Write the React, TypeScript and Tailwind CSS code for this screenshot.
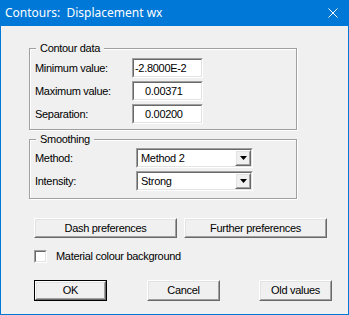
import React from "react";

function Sunken({ className = "", children }: { className?: string; children?: React.ReactNode }) {
  return (
    <div className={`border-t border-l border-t-[#a0a0a0] border-l-[#a0a0a0] border-b border-r border-b-white border-r-white ${className}`}>
      <div className="h-full w-full border-t border-l border-t-[#696969] border-l-[#696969] border-b border-r border-b-[#e3e3e3] border-r-[#e3e3e3] bg-white flex items-center">
        {children}
      </div>
    </div>
  );
}

function Raised({ className = "", children }: { className?: string; children?: React.ReactNode }) {
  return (
    <div className={`border-t border-l border-t-white border-l-white border-b border-r border-b-[#696969] border-r-[#696969] bg-[#f0f0f0] ${className}`}>
      <div className="h-full w-full border-t border-l border-t-[#e3e3e3] border-l-[#e3e3e3] border-b border-r border-b-[#a0a0a0] border-r-[#a0a0a0] flex items-center justify-center">
        {children}
      </div>
    </div>
  );
}

function Group({ title, className = "", children }: { title: string; className?: string; children?: React.ReactNode }) {
  return (
    <div className={`relative w-[268px] border border-[#a0a0a0] shadow-[inset_1px_1px_0_#fff,1px_1px_0_#fff] ${className}`}>
      <span className="absolute left-[6px] top-[-7px] bg-[#f0f0f0] px-[4px] leading-[13px] whitespace-nowrap">{title}</span>
      {children}
    </div>
  );
}

function Arrow() {
  return (
    <svg width="7" height="4" viewBox="0 0 7 4">
      <path d="M0 0H7L3.5 4Z" fill="#000" />
    </svg>
  );
}

function Select({ value }: { value: string }) {
  return (
    <Sunken className="w-[117px] h-[20px]">
      <span className="pl-[3px] flex-1 leading-[16px]">{value}</span>
      <Raised className="w-[16px] h-[16px]">
        <Arrow />
      </Raised>
    </Sunken>
  );
}

export default function App() {
  return (
    <div className="w-[349px] h-[315px] flex flex-col bg-[#f0f0f0] font-['Liberation_Sans',Arial,sans-serif] text-black">
      <div className="h-[26px] shrink-0 bg-[#0078d7] flex items-center justify-between pl-[5px] pr-[11px] text-white text-[12px] font-['Noto_Sans',sans-serif]">
        <span className="whitespace-pre">Contours:  Displacement wx</span>
        <svg width="10" height="10" viewBox="0 0 10 10">
          <path d="M0.5 0.5L9.5 9.5M9.5 0.5L0.5 9.5" stroke="#fff" strokeWidth="1" />
        </svg>
      </div>
      <div className="flex-1 border-l border-r border-b border-[#0078d7] pl-[28px] pt-[22px] text-[11px] tracking-[-0.3px]">
        <Group title="Contour data" className="h-[82px]">
          <div className="flex flex-col gap-[3px] pt-[9px] pl-[5px]">
            <div className="flex items-center h-[20px]">
              <span className="w-[97px]">Minimum value:</span>
              <Sunken className="w-[71px] h-[20px]">
                <span className="pl-[1px]">-2.8000E-2</span>
              </Sunken>
            </div>
            <div className="flex items-center h-[20px]">
              <span className="w-[97px]">Maximum value:</span>
              <Sunken className="w-[71px] h-[20px]">
                <span className="pl-[11px]">0.00371</span>
              </Sunken>
            </div>
            <div className="flex items-center h-[20px]">
              <span className="w-[97px]">Separation:</span>
              <Sunken className="w-[71px] h-[20px]">
                <span className="pl-[11px]">0.00200</span>
              </Sunken>
            </div>
          </div>
        </Group>
        <Group title="Smoothing" className="h-[60px] mt-[9px]">
          <div className="flex flex-col gap-[3px] pt-[8px] pl-[5px]">
            <div className="flex items-center h-[20px]">
              <span className="w-[101px]">Method:</span>
              <Select value="Method 2" />
            </div>
            <div className="flex items-center h-[20px]">
              <span className="w-[101px]">Intensity:</span>
              <Select value="Strong" />
            </div>
          </div>
        </Group>
        <div className="flex gap-[7px] mt-[19px] ml-[5px]">
          <Raised className="w-[143px] h-[20px]">Dash preferences</Raised>
          <Raised className="w-[143px] h-[20px]">Further preferences</Raised>
        </div>
        <div className="flex items-center mt-[10px] ml-[5px]">
          <Sunken className="w-[13px] h-[13px]" />
          <span className="ml-[9px]">Material colour background</span>
        </div>
        <div className="flex mt-[15px] ml-[5px]">
          <div className="border border-black w-[73px] h-[21px]">
            <Raised className="w-full h-full">OK</Raised>
          </div>
          <Raised className="w-[73px] h-[21px] ml-[40px]">Cancel</Raised>
          <Raised className="w-[73px] h-[21px] ml-[39px]">Old values</Raised>
        </div>
      </div>
    </div>
  );
}
